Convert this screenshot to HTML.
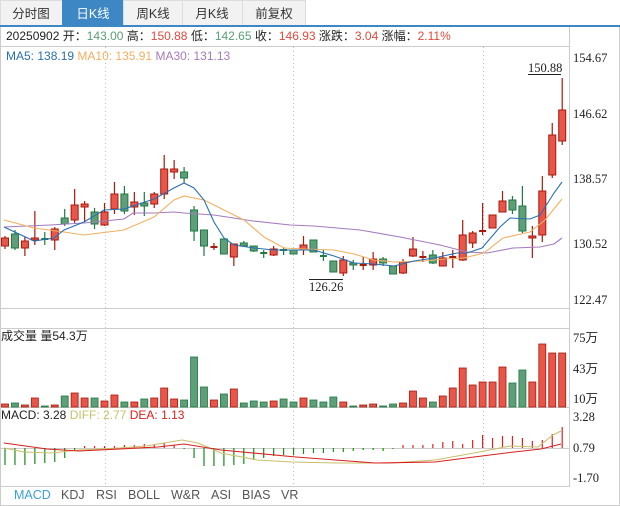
<!DOCTYPE html>
<html><head><meta charset="utf-8"><style>
body{margin:0;background:#fff;width:620px;height:506px;overflow:hidden;font-family:"Liberation Sans","Noto Sans CJK SC",sans-serif}
svg{position:absolute;left:0;top:0}
</style></head><body>
<svg id="s" width="620" height="506" xmlns="http://www.w3.org/2000/svg">
<rect x="0" y="0" width="620" height="506" fill="#fff"/>
<g font-size="12.5" font-family="Liberation Sans,Noto Sans CJK SC,sans-serif" text-anchor="middle">
<rect x="0.5" y="0.5" width="62" height="25" fill="#f2f2f2" stroke="#ddd"/>
<rect x="62.5" y="0.5" width="61" height="25" fill="#3d87c4" stroke="#3d87c4"/>
<rect x="123.5" y="0.5" width="59" height="25" fill="#f2f2f2" stroke="#ddd"/>
<rect x="182.5" y="0.5" width="60" height="25" fill="#f2f2f2" stroke="#ddd"/>
<rect x="242.5" y="0.5" width="63" height="25" fill="#f2f2f2" stroke="#ddd"/>
<text x="31" y="18" fill="#333">分时图</text>
<text x="93" y="18" fill="#fff">日K线</text>
<text x="153" y="18" fill="#333">周K线</text>
<text x="212" y="18" fill="#333">月K线</text>
<text x="274" y="18" fill="#333">前复权</text>
</g>
<rect x="0" y="25" width="620" height="2" fill="#3d87c4"/>
<g fill="none" stroke="#ccc">
<line x1="0.5" y1="27" x2="0.5" y2="506"/>
<line x1="619.5" y1="27" x2="619.5" y2="506"/>
<line x1="0" y1="505.5" x2="620" y2="505.5"/>
<line x1="569.5" y1="27" x2="569.5" y2="487"/>
<line x1="0" y1="46.5" x2="569" y2="46.5"/>
<line x1="0" y1="308.5" x2="569" y2="308.5"/>
<line x1="0" y1="328.5" x2="569" y2="328.5"/>
<line x1="0" y1="407.5" x2="569" y2="407.5"/>
<line x1="0" y1="486.5" x2="569" y2="486.5"/>
</g>
<g stroke="#bbb" stroke-dasharray="1,3">
<line x1="105.5" y1="47" x2="105.5" y2="487"/>
<line x1="293.5" y1="47" x2="293.5" y2="487"/>
<line x1="483.5" y1="47" x2="483.5" y2="487"/>
</g>
<line x1="0" y1="448.5" x2="569" y2="448.5" stroke="#ccc"/>
<text y="40" font-size="12" font-family="Liberation Sans,Noto Sans CJK SC,sans-serif"><tspan x="6" fill="#222">20250902 开：</tspan><tspan fill="#5a9e77">143.00</tspan><tspan fill="#222"> 高：</tspan><tspan fill="#e04a3a">150.88</tspan><tspan fill="#222"> 低：</tspan><tspan fill="#5a9e77">142.65</tspan><tspan fill="#222"> 收：</tspan><tspan fill="#e04a3a">146.93</tspan><tspan fill="#222"> 涨跌：</tspan><tspan fill="#e04a3a">3.04</tspan><tspan fill="#222"> 涨幅：</tspan><tspan fill="#e04a3a">2.11%</tspan></text>
<text y="60" font-size="12"><tspan x="6" fill="#2a6fb0">MA5: 138.19 </tspan><tspan fill="#f0b060">MA10: 135.91 </tspan><tspan fill="#a57bbf">MA30: 131.13</tspan></text>
<g font-size="12.5" font-family="Liberation Serif,serif" fill="#222">
<text x="573" y="62">154.67</text><text x="573" y="118">146.62</text><text x="573" y="183">138.57</text><text x="573" y="248">130.52</text><text x="573" y="304">122.47</text>
<text x="573" y="342">75万</text><text x="573" y="373">43万</text><text x="573" y="403">10万</text>
<text x="573" y="421">3.28</text><text x="573" y="452">0.79</text><text x="573" y="482">-1.70</text>
<text x="528" y="72">150.88</text><text x="309" y="291">126.26</text>
</g>
<line x1="528" y1="74.5" x2="561" y2="74.5" stroke="#222"/>
<line x1="309" y1="279.5" x2="343" y2="279.5" stroke="#222"/>
<text x="1" y="340" font-size="12" fill="#222" font-family="Liberation Sans,Noto Sans CJK SC,sans-serif">成交量 量54.3万</text>
<text y="419" font-size="12"><tspan x="1" fill="#222">MACD: 3.28 </tspan><tspan fill="#c8c06a">DIFF: 2.77 </tspan><tspan fill="#d82020">DEA: 1.13</tspan></text>
<g font-size="12.5" fill="#555">
<text x="14" y="499" fill="#3aa0d0">MACD</text><text x="61" y="499">KDJ</text><text x="96" y="499">RSI</text><text x="128" y="499">BOLL</text><text x="171" y="499">W&amp;R</text><text x="211" y="499">ASI</text><text x="242" y="499">BIAS</text><text x="281" y="499">VR</text>
</g>
<g id="g"></g>
</svg>
<script>
var C=[[1,238,246,236,249],[0,234,248,230,250],[1,241,248,237,256],[1,238,240,211,245],[0,239,239,232,245],[1,229,240,227,250],[0,218,224,209,226],[1,205,220,189,223],[1,204,207,201,222],[0,212,224,208,229],[1,212,225,203,226],[1,194,209,182,214],[0,194,211,186,214],[1,202,207,192,215],[0,203,206,192,216],[1,194,204,192,208],[1,169,194,155,199],[1,169,172,160,179],[0,172,178,167,183],[0,210,231,206,241],[0,230,246,230,256],[1,247,247,243,250],[0,239,254,239,254],[1,244,257,244,266],[0,243,246,241,247],[0,246,251,246,252],[0,253,253,250,258],[1,249,255,246,256],[0,250,250,247,255],[0,250,254,250,254],[1,245,250,236,255],[0,240,252,240,252],[0,256,256,250,261],[0,261,272,261,272],[1,260,273,256,276],[0,263,265,260,270],[1,265,265,257,270],[1,259,265,252,270],[0,259,263,257,266],[0,266,274,266,274],[1,262,273,259,274],[1,249,256,237,257],[1,257,257,251,262],[0,255,263,250,264],[1,258,266,252,266],[1,257,257,250,268],[1,235,260,220,261],[1,233,243,231,248],[1,231,231,203,235],[1,215,228,215,228],[1,201,212,191,212],[0,200,210,196,214],[0,206,231,186,233],[1,236,238,226,258],[1,191,235,176,242],[1,135,175,123,178],[1,110,141,78,145]];
var V=[404,403,405,398,406,405,396,393,398,398,401,395,402,402,399,398,388,399,400,357,387,400,394,389,403,401,402,401,399,402,398,400,402,397,402,406,405,404,406,404,403,391,398,402,396,388,368,385,382,382,367,383,370,382,344,353,353];
var M=[465,465,465,464,463,462,458,450,446,446,446,446,445,445,444,444,443,445,449,458,466,466,466,465,464,460,458,456,455,455,454,453,453,452,452,451,450,450,451,449,445,445,445,444,442,441,444,440,435,438,436,436,438,441,440,434,427];
var h='';
function X(i){return 5+9.95*i;}
for(var i=0;i<C.length;i++){var c=C[i],x=X(i),f=c[0]?'#e8564a':'#5e9e78',s=c[0]?'#a8180c':'#1f7a42';
h+='<line x1="'+x+'" y1="'+c[3]+'" x2="'+x+'" y2="'+c[4]+'" stroke="'+s+'" stroke-width="1.2"/>';
var t=Math.min(c[1],c[2]),b=Math.max(c[1],c[2]);
if(b-t<2){h+='<rect x="'+(x-3.5)+'" y="'+(t-1)+'" width="7" height="2" fill="'+s+'"/>';}
else h+='<rect x="'+(x-3.5)+'" y="'+t+'" width="7" height="'+(b-t)+'" fill="'+f+'" stroke="'+s+'"/>';
var vt=V[i];h+='<rect x="'+(x-3.5)+'" y="'+vt+'" width="7" height="'+(407-vt)+'" fill="'+f+'" stroke="'+s+'" stroke-width="0.8"/>';
var m=M[i];h+='<line x1="'+x+'" y1="448" x2="'+x+'" y2="'+m+'" stroke="'+(m>448?'#1a8a1a':'#e02020')+'" stroke-width="1.2"/>';}
function P(a,col){return '<polyline fill="none" stroke="'+col+'" stroke-width="1.1" points="'+a.join(' ')+'"/>';}
h+=P(['4,227','50,225','84,223','124,219','133,213','154,213','174,212','184,213','214,215','253,221','290,225','314,226','360,230','400,237','440,245','467,252','487,253','513,248','540,247','554,244','562,238'],'#a57bbf');
h+=P(['4,220','34,228','64,232','84,235','124,230','154,217','174,200','184,196','204,200','224,210','244,220','264,237','284,248','304,249','334,250','354,254','374,260','394,262','424,261','444,259','464,258','484,253','503,238','530,232','545,220','562,199'],'#f0b060');
h+=P(['4,227','34,241','54,238','64,230','84,222','104,210','124,209','154,199','174,188','184,183','194,188','204,200','214,222','224,238','234,245','254,248','274,250','294,250','314,250','334,256','354,263','374,264','394,266','414,261','434,258','457,253','467,253','482,248','500,227','510,218','530,219','540,215','554,193','562,182'],'#2a6fb0');
h+=P(['4,448','24,452','51,453','79,450','119,448','146,446','182,440','198,443','221,453','257,460','292,462','336,463','391,463','435,460','474,453','510,446','538,447','553,435','561,431'],'#c8c06a');
h+=P(['4,443','47,449','79,451','158,447','184,444','221,450','296,457','375,463','435,462','474,457','514,452','541,449','561,444'],'#d82020');
document.getElementById('g').innerHTML=h;
</script>
</body></html>
